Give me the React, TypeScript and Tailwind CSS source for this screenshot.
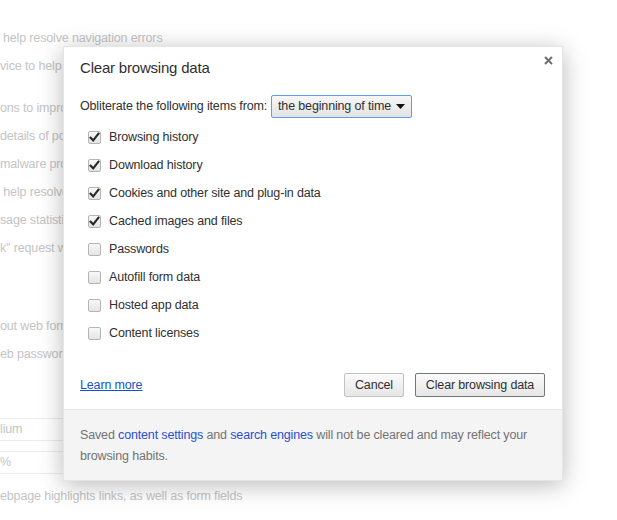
import { useState } from "react";

type Item = { label: string; checked: boolean };

const initialItems: Item[] = [
  { label: "Browsing history", checked: true },
  { label: "Download history", checked: true },
  { label: "Cookies and other site and plug-in data", checked: true },
  { label: "Cached images and files", checked: true },
  { label: "Passwords", checked: false },
  { label: "Autofill form data", checked: false },
  { label: "Hosted app data", checked: false },
  { label: "Content licenses", checked: false },
];

function Checkbox({ checked, onChange }: { checked: boolean; onChange: () => void }) {
  return (
    <button
      onClick={onChange}
      className="flex h-[13px] w-[13px] shrink-0 items-center justify-center rounded-[2px] border border-[#b4b4b4] bg-gradient-to-b from-[#f8f8f8] to-[#e4e4e4]"
    >
      {checked && (
        <svg width="11" height="11" viewBox="0 0 11 11">
          <path d="M1.6 5.8 L4.2 8.4 L9.4 1.8" fill="none" stroke="#2b2b2b" strokeWidth="2.2" strokeLinecap="square" />
        </svg>
      )}
    </button>
  );
}

// lines of the settings page that peek out left of the dialog
const hiddenLines = [
  "vice to help complete searches",
  "ons to improve Chrome",
  "details of possible",
  "malware protection",
  " help resolve spelling",
  "sage statistics",
  "k\" request with",
];

export default function App() {
  const [items, setItems] = useState(initialItems);

  const toggle = (idx: number) =>
    setItems((prev) => prev.map((it, i) => (i === idx ? { ...it, checked: !it.checked } : it)));

  return (
    <div className="relative h-[520px] w-[617px] overflow-hidden bg-white font-['Liberation_Sans',Arial,sans-serif] text-[12.5px] tracking-[-0.15px]">
      {/* page behind the dialog, faded */}
      <div className="flex flex-col pt-[24px] text-[#c4c4c4]">
        <div className="h-7 pl-[3px] leading-7 whitespace-nowrap">help resolve navigation errors</div>
        <div className="h-7 w-[64px] overflow-hidden leading-7 whitespace-pre">{hiddenLines[0]}</div>
        <div className="mt-[14px] flex w-[64px] flex-col overflow-hidden">
          {hiddenLines.slice(1).map((t) => (
            <div key={t} className="h-7 leading-7 whitespace-pre">
              {t}
            </div>
          ))}
        </div>
        <div className="mt-[50px] h-7 w-[64px] overflow-hidden leading-7 whitespace-nowrap">out web forms</div>
        <div className="h-7 w-[64px] overflow-hidden leading-7 whitespace-nowrap">eb passwords</div>
        <div className="mt-[50px] flex h-[23px] w-[64px] items-center border-y border-[#ececec]">lium</div>
        <div className="mt-[10px] flex h-[23px] w-[64px] items-center border-y border-[#ececec]">%</div>
        <div className="mt-[8px] h-7 leading-7 whitespace-nowrap">ebpage highlights links, as well as form fields</div>
      </div>

      {/* dialog */}
      <div className="absolute left-[63px] top-[46px] flex h-[435px] w-[500px] flex-col overflow-hidden rounded-[2px] border border-black/10 bg-white text-[#303030] shadow-[0_4px_24px_rgba(0,0,0,0.28)]">
        <button className="absolute right-[7px] top-[6px] flex h-[14px] w-[14px] items-center justify-center">
          <svg width="9" height="9" viewBox="0 0 9 9">
            <path d="M1 1 L8 8 M8 1 L1 8" stroke="#6e6e6e" strokeWidth="2" />
          </svg>
        </button>

        <div className="flex h-[42px] items-center pl-[16px] text-[15px] tracking-[-0.2px]">Clear browsing data</div>

        <div className="mt-[6px] flex items-center pl-[16px]">
          <span className="whitespace-nowrap">Obliterate the following items from:</span>
          <div className="ml-[4px] flex h-[23px] w-[141px] items-center justify-between rounded-[2px] border border-[#5b9cf5] bg-gradient-to-b from-[#f7f7f7] to-[#e3e3e3] pl-[6px] pr-[6px]">
            <span className="whitespace-nowrap">the beginning of time</span>
            <svg width="9" height="5" viewBox="0 0 9 5">
              <path d="M0 0 H9 L4.5 5 Z" fill="#111" />
            </svg>
          </div>
        </div>

        <div className="mt-[5px] flex flex-col pl-[24px]">
          {items.map((it, idx) => (
            <label key={it.label} className="flex h-[28px] items-center gap-[8px]">
              <Checkbox checked={it.checked} onChange={() => toggle(idx)} />
              <span>{it.label}</span>
            </label>
          ))}
        </div>

        <div className="mt-[26px] flex h-[24px] items-center pl-[16px] pr-[17px]">
          <a href="#" className="text-[#1155cc] underline">
            Learn more
          </a>
          <div className="ml-auto flex gap-[11px]">
            <button className="h-[24px] w-[60px] rounded-[2px] border border-[#c2c2c2] bg-gradient-to-b from-[#fbfbfb] to-[#e6e6e6] text-[#303030]">
              Cancel
            </button>
            <button className="h-[24px] w-[130px] rounded-[2px] border border-[#767676] bg-gradient-to-b from-[#fbfbfb] to-[#e6e6e6] text-[#303030]">
              Clear browsing data
            </button>
          </div>
        </div>

        <div className="mt-auto flex h-[71px] flex-col border-t border-[#e6e6e6] bg-[#f4f4f4] pl-[16px] pt-[15px] leading-[21px] text-[#737373]">
          <p className="whitespace-nowrap">
            Saved <a href="#" className="text-[#2a4fd6]">content settings</a> and{" "}
            <a href="#" className="text-[#2a4fd6]">search engines</a> will not be cleared and may reflect your
          </p>
          <p>browsing habits.</p>
        </div>
      </div>
    </div>
  );
}
